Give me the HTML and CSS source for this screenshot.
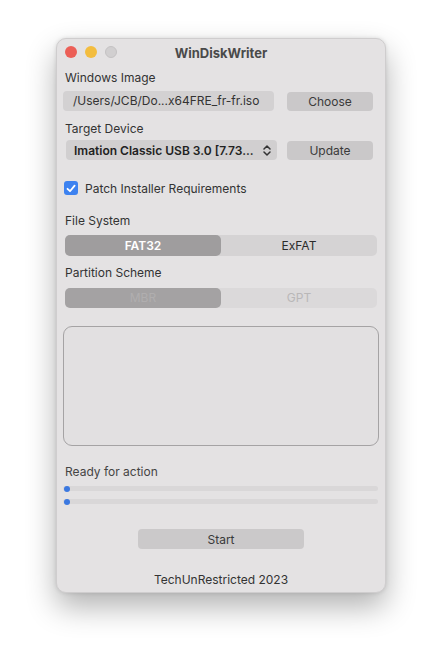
FILE: index.html
```html
<!DOCTYPE html>
<html lang="en">
<head>
    <meta charset="UTF-8">
    <meta name="viewport" content="width=device-width, initial-scale=1.0">
    <title>WinDiskWriter</title>
    <link rel="stylesheet" href="styles.css">
</head>
<body>
    <div class="window">
        <div class="titlebar">
            <div class="lights">
                <span class="light red"></span>
                <span class="light yellow"></span>
                <span class="light gray"></span>
            </div>
            <div class="title">WinDiskWriter</div>
        </div>

        <div class="label first">Windows Image</div>
        <div class="row">
            <div class="field">/Users/JCB/Do...x64FRE_fr-fr.iso</div>
            <button class="btn">Choose</button>
        </div>

        <div class="label">Target Device</div>
        <div class="row device">
            <div class="select">
                <span>Imation Classic USB 3.0 [7.73...</span>
                <svg class="chevron" width="8" height="11" viewBox="0 0 8 11">
                    <path d="M1 4 L4 1 L7 4 M1 7 L4 10 L7 7" fill="none" stroke="#333" stroke-width="1.5" stroke-linecap="round" stroke-linejoin="round"/>
                </svg>
            </div>
            <button class="btn">Update</button>
        </div>

        <label class="check">
            <span class="box">
                <svg width="10" height="9" viewBox="0 0 10 9">
                    <path d="M1.5 4.8 L4 7.2 L8.6 1.6" fill="none" stroke="#fff" stroke-width="1.8" stroke-linecap="round" stroke-linejoin="round"/>
                </svg>
            </span>
            Patch Installer Requirements
        </label>

        <div class="label section">File System</div>
        <div class="segmented">
            <div class="seg active">FAT32</div>
            <div class="seg">ExFAT</div>
        </div>

        <div class="label tight">Partition Scheme</div>
        <div class="segmented disabled">
            <div class="seg active">MBR</div>
            <div class="seg">GPT</div>
        </div>

        <div class="logbox"></div>

        <div class="status">Ready for action</div>
        <div class="progress"><span class="knob"></span></div>
        <div class="progress"><span class="knob"></span></div>

        <div class="start-row">
            <button class="btn start">Start</button>
        </div>

        <div class="footer">TechUnRestricted 2023</div>
    </div>
</body>
</html>
```

FILE: styles.css
```css
body {
    margin: 0;
    padding-bottom: 70px;
    background: #fff;
    font-family: Inter, "Noto Sans", sans-serif;
    color: #2b2b2b;
}

.window {
    width: 330px;
    height: 555px;
    margin: 38px 0 0 56px;
    box-sizing: border-box;
    background: #e4e2e3;
    border-radius: 10px;
    border: 1px solid #cfcdce;
    box-shadow: 0 14px 30px rgba(0,0,0,0.3), 0 0 4px rgba(0,0,0,0.12);
    padding: 0 7px 0 7px;
    display: flex;
    flex-direction: column;
}

.titlebar {
    position: relative;
    height: 26px;
    display: flex;
    align-items: center;
    justify-content: center;
}

.lights {
    position: absolute;
    left: 1px;
    top: 7px;
    display: flex;
    gap: 8px;
}

.light {
    width: 12px;
    height: 12px;
    border-radius: 50%;
}

.red { background: #ec5f57; }
.yellow { background: #f3bd3f; }
.gray { background: #d1cfd0; border: 1px solid #c4c2c3; box-sizing: border-box; }

.title {
    font-weight: 700;
    font-size: 13px;
    color: #4a4a4a;
    margin-top: 2px;
}

.label {
    font-size: 12px;
    color: #333;
    padding-left: 1px;
    height: 15px;
    line-height: 15px;
    margin-top: 10px;
}

.label.first {
    margin-top: 5px;
}

.label.section {
    margin-top: 18px;
}

.label.tight {
    margin-top: 9px;
}

.row {
    display: flex;
    align-items: center;
    justify-content: space-between;
    margin-top: 6px;
    height: 20px;
}

.row.device {
    margin-top: 4px;
}

.field {
    width: 211px;
    height: 20px;
    line-height: 20px;
    box-sizing: border-box;
    padding-left: 10px;
    background: #d3d1d2;
    border-radius: 4px;
    font-size: 12px;
    color: #333;
    margin-left: -1px;
}

.btn {
    width: 86px;
    height: 19px;
    margin-right: 5px;
    border: none;
    border-radius: 4px;
    background: #cac8c9;
    font-family: inherit;
    font-size: 12px;
    color: #3a3a3a;
    padding: 0;
}

.select {
    width: 211px;
    height: 20px;
    box-sizing: border-box;
    margin-left: 2px;
    padding: 0 6px 0 8px;
    background: #d1cfd0;
    border-radius: 4px;
    font-size: 12px;
    font-weight: 600;
    color: #222;
    display: flex;
    align-items: center;
    justify-content: space-between;
}

.check {
    display: flex;
    align-items: center;
    gap: 7px;
    font-size: 12px;
    color: #333;
    margin-top: 21px;
    height: 14px;
}

.box {
    width: 14px;
    height: 14px;
    border-radius: 3px;
    background: #3d82f0;
    display: flex;
    align-items: center;
    justify-content: center;
}

.segmented {
    display: flex;
    height: 21px;
    margin: 7px 1px 0 1px;
    background: #d5d3d4;
    border-radius: 5px;
}

.seg {
    flex: 1;
    text-align: center;
    font-size: 12px;
    line-height: 21px;
    color: #2b2b2b;
}

.seg.active {
    background: #9f9d9e;
    color: #fff;
    font-weight: 600;
    border-radius: 5px;
}

.segmented.disabled {
    height: 20px;
    margin-top: 8px;
    background: #dbd9da;
}

.segmented.disabled .seg {
    line-height: 20px;
    color: #b9b7b8;
}

.segmented.disabled .seg.active {
    background: #a4a2a3;
    color: #b0aeaf;
    font-weight: 400;
}

.logbox {
    height: 120px;
    margin: 18px -1px 0 -1px;
    box-sizing: border-box;
    border: 1.5px solid #a5a3a4;
    border-radius: 9px;
    background: #e2e0e1;
}

.status {
    font-size: 12px;
    color: #444;
    margin-top: 18px;
    padding-left: 1px;
    height: 15px;
    line-height: 15px;
}

.progress {
    position: relative;
    height: 5px;
    margin: 7px 0 0 -1px;
    background: #d9d7d8;
    border-radius: 3px;
}

.progress + .progress {
    margin-top: 8px;
}

.knob {
    position: absolute;
    left: 1px;
    top: -0.5px;
    width: 6px;
    height: 6px;
    border-radius: 50%;
    background: #3b78e0;
}

.start-row {
    display: flex;
    justify-content: center;
    margin-top: 25px;
}

.btn.start {
    width: 166px;
    height: 20px;
    margin: 0;
    background: #cbc9ca;
}

.footer {
    text-align: center;
    font-size: 12px;
    color: #333;
    margin-top: 23px;
}
```
